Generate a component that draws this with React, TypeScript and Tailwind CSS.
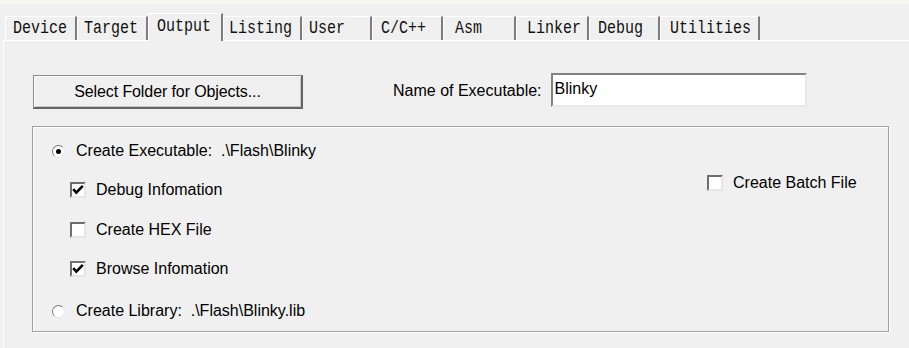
import React from 'react';

const tabs = [
  { label: 'Device', cls: 'w-[72px] pl-[7px]', active: false },
  { label: 'Target', cls: 'w-[71px] pl-[6px]', active: false },
  { label: 'Output', cls: 'w-[75px] pl-[8px]', active: true },
  { label: 'Listing', cls: 'w-[79px] pl-[5px]', active: false },
  { label: 'User', cls: 'w-[70px] pl-[6px]', active: false },
  { label: 'C/C++', cls: 'w-[71px] pl-[8px]', active: false },
  { label: 'Asm', cls: 'w-[73px] pl-[11px]', active: false },
  { label: 'Linker', cls: 'w-[73px] pl-[10px]', active: false },
  { label: 'Debug', cls: 'w-[71px] pl-[8px]', active: false },
  { label: 'Utilities', cls: 'w-[100px] pl-[9px]', active: false },
];

function Tab({ label, cls, active }: { label: string; cls: string; active: boolean }) {
  return (
    <div
      className={
        'flex items-center border-t border-l border-t-white border-l-white border-r-2 border-r-[#7c7c7c] bg-[#f0f0f0] text-[15px] leading-none text-[#111] ' +
        cls +
        (active ? ' h-[28px] -mb-px relative z-10 pb-[3px]' : ' h-[24px]')
      }
      style={{ fontFamily: '"Liberation Mono", "DejaVu Sans Mono", monospace' }}
    >
      <span className="inline-block scale-y-[1.2]">{label}</span>
    </div>
  );
}

function CheckBox({ checked }: { checked: boolean }) {
  return (
    <div className="w-[16px] h-[16px] bg-white border-2 border-t-[#6e6e6e] border-l-[#6e6e6e] border-b-[#e6e6e6] border-r-[#e6e6e6] flex items-center justify-center">
      {checked && (
        <svg width="12" height="12" viewBox="0 0 12 12">
          <path d="M1.2 5.2 L4.3 8.6 L10.8 1.8" fill="none" stroke="#000" strokeWidth="2.6" />
        </svg>
      )}
    </div>
  );
}

function Radio({ checked }: { checked: boolean }) {
  return (
    <div className="w-[13px] h-[13px] rounded-full bg-white border border-t-[#7a7a7a] border-l-[#7a7a7a] border-b-[#e6e6e6] border-r-[#e6e6e6] flex items-center justify-center">
      {checked && <div className="w-[5px] h-[5px] rounded-full bg-black" />}
    </div>
  );
}

export default function App() {
  return (
    <div
      className="w-[909px] h-[348px] bg-[#f0f0f0] overflow-hidden text-black"
      style={{ fontFamily: '"Liberation Sans", Arial, sans-serif' }}
    >
      <div className="h-[4px] bg-[#f9f5f1]" />
      <div className="ml-[3px] mt-[9px] pl-[2px] flex items-end h-[27px]">
        {tabs.map((t) => (
          <Tab key={t.label} label={t.label} cls={t.cls} active={t.active} />
        ))}
      </div>
      <div className="ml-[3px] h-[308px] border-t border-l border-white text-[16px] leading-none">
        <div className="mt-[32px] flex items-center h-[36px]">
          <div className="ml-[29px] self-end w-[270px] h-[34px] flex items-center justify-center border border-[#8c8c8c] border-b-2 border-r-2 border-b-[#646464] border-r-[#646464] shadow-[inset_1px_1px_0_#fff,inset_-1px_-1px_0_#c8c8c8] tracking-[-0.1px]">
            Select Folder for Objects...
          </div>
          <div className="ml-[90px]">Name of Executable:</div>
          <div className="ml-[9px] self-start w-[256px] h-[34px] bg-white border-2 border-t-[#828282] border-l-[#828282] border-b-[#e8e8e8] border-r-[#e8e8e8] pl-[2px] pt-[6px]">
            Blinky
          </div>
        </div>
        <div className="mt-[17px] ml-[28px] w-[857px] h-[206px] border border-[#a0a0a0] shadow-[inset_1px_1px_0_#fff,1px_1px_0_#fff] flex">
          <div className="w-[674px] pl-[19px] pt-[14px] flex flex-col">
            <div className="h-[20px] flex items-center">
              <Radio checked />
              <span className="ml-[11px]">Create Executable:&nbsp;&nbsp;.\Flash\Blinky</span>
            </div>
            <div className="mt-[19px] h-[20px] flex items-center pl-[18px]">
              <CheckBox checked />
              <span className="ml-[10px]">Debug Infomation</span>
            </div>
            <div className="mt-[20px] h-[20px] flex items-center pl-[18px]">
              <CheckBox checked={false} />
              <span className="ml-[10px]">Create HEX File</span>
            </div>
            <div className="mt-[19px] h-[20px] flex items-center pl-[18px]">
              <CheckBox checked />
              <span className="ml-[10px]">Browse Infomation</span>
            </div>
            <div className="mt-[22px] h-[20px] flex items-center">
              <Radio checked={false} />
              <span className="ml-[11px]">Create Library:&nbsp;&nbsp;.\Flash\Blinky.lib</span>
            </div>
          </div>
          <div className="pt-[46px]">
            <div className="h-[20px] flex items-center">
              <CheckBox checked={false} />
              <span className="ml-[10px]">Create Batch File</span>
            </div>
          </div>
        </div>
      </div>
    </div>
  );
}
